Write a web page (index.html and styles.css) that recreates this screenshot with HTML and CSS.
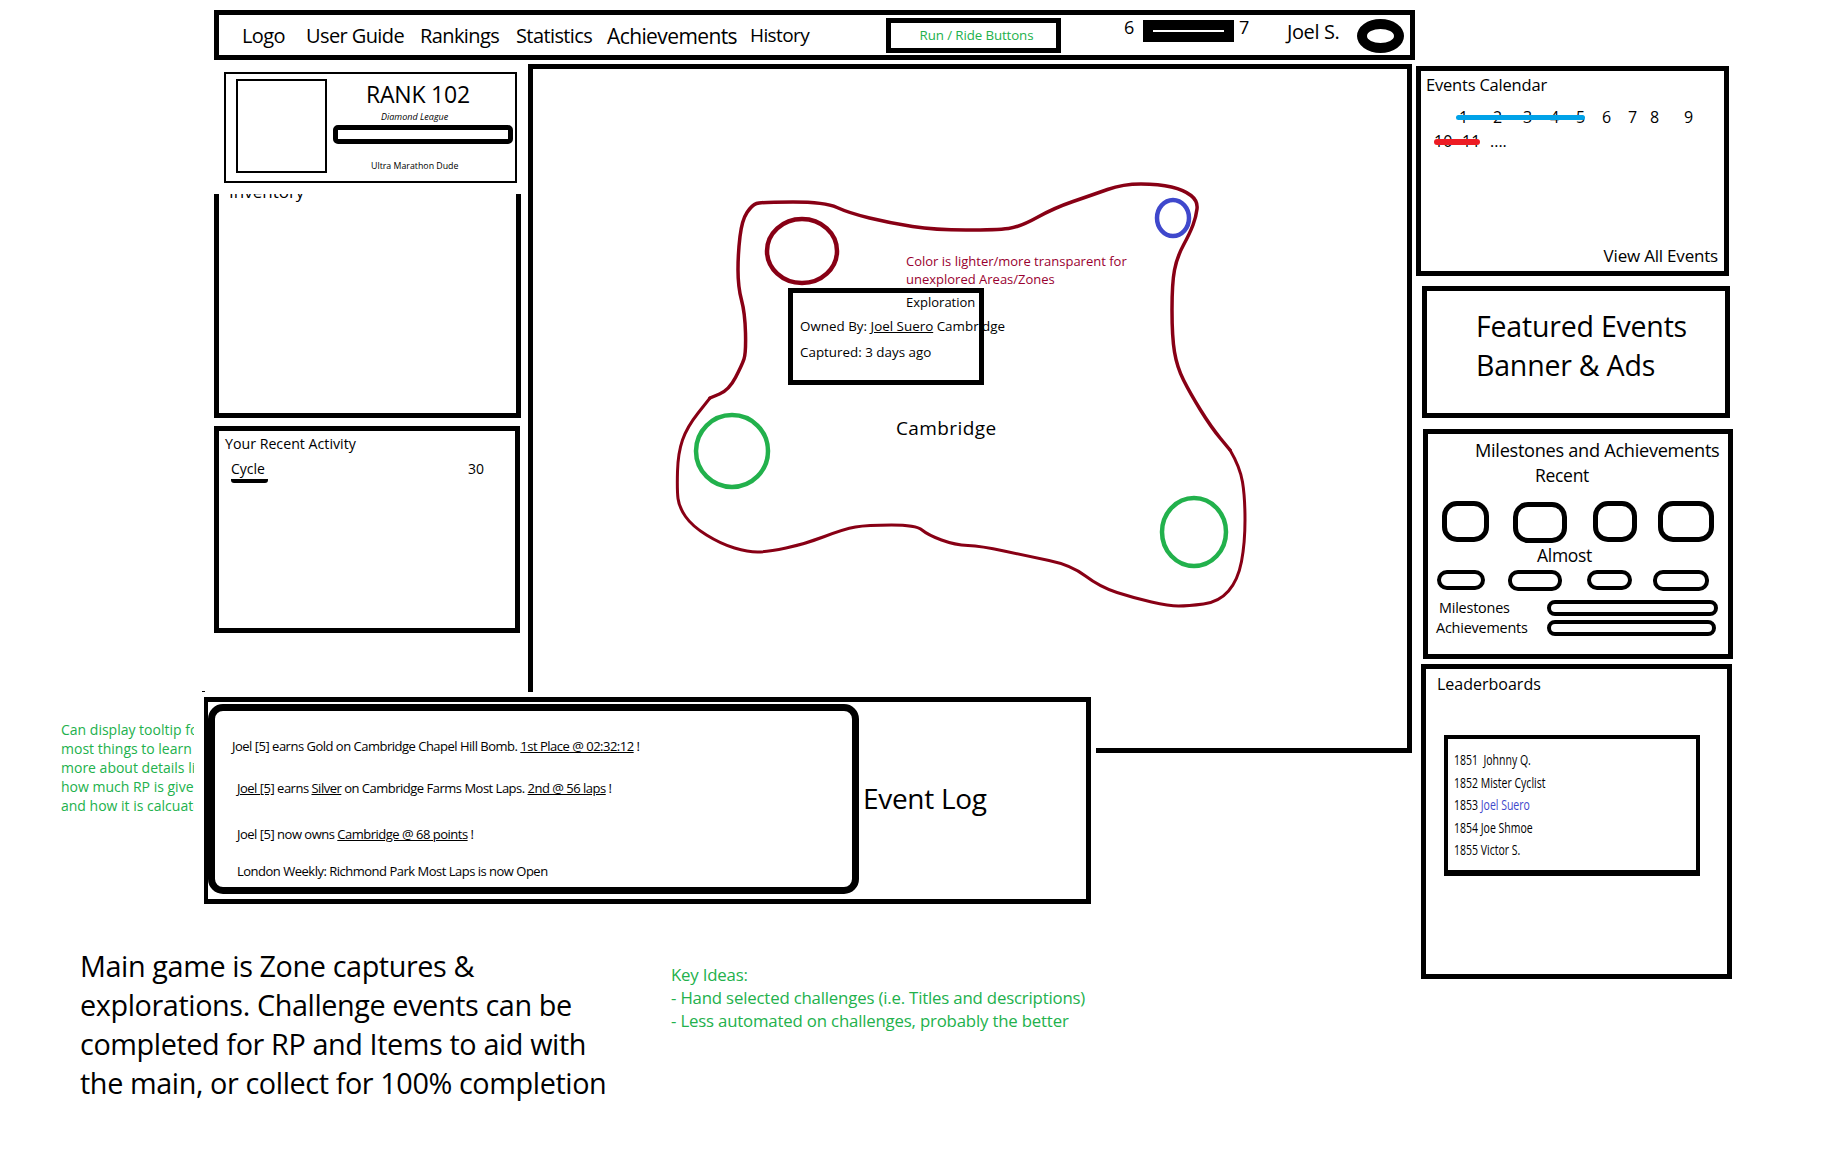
FILE: index.html
```html
<!DOCTYPE html>
<html lang="en">
<head>
    <meta charset="UTF-8">
    <title>Zone Capture Wireframe</title>
    <link rel="stylesheet" href="styles.css">
</head>
<body>

<div class="canvas">

    <!-- Top nav -->
    <div class="panel nav">
        <span class="nav-link">Logo</span>
        <span class="nav-link">User Guide</span>
        <span class="nav-link">Rankings</span>
        <span class="nav-link">Statistics</span>
        <span class="nav-link nav-link-big">Achievements</span>
        <span class="nav-link nav-link-small">History</span>
        <div class="run-box">Run / Ride Buttons</div>
        <span class="level">6</span>
        <div class="level-bar"><div class="level-fill"></div></div>
        <span class="level">7</span>
        <span class="user-name">Joel S.</span>
        <div class="avatar"></div>
    </div>

    <!-- Map -->
    <div class="panel map"></div>
    <svg class="map-art" width="1834" height="1152" viewBox="0 0 1834 1152">
        <path class="zone zone-top" d="M710,398 L719.5,394 Q729,390 735.5,377.5 Q742,365 744,359 Q746,353 745.5,333 Q745,313 741.5,300 Q738,287 738,270 Q738,253 740,236.5 Q742,220 747,212.5 Q752,205 756.5,203.5 Q761,202 793,202 Q825,202 837,207.5 Q849,213 869.5,218 Q890,223 912.5,226.5 Q935,230 966,230 Q997,230 1008.5,228.5 Q1020,227 1037,217.5 Q1054,208 1073,201.5 Q1092,195 1107.5,189.5 Q1123,184 1141,184 Q1159,184 1171.5,187 Q1184,190 1191,195.5 Q1198,201 1197,209 Q1196,217 1193,225 Q1190,233 1183.5,245 Q1177,257 1174.5,270 Q1172,283 1172,310 Q1172,337 1174.5,352 Q1177,367 1183.5,380 Q1190,393 1200.5,410 Q1211,427 1220.5,438.5 L1230,450"/>
        <path class="zone zone-bottom" d="M1230,450 Q1240,467 1242.5,482 Q1245,497 1245,520 Q1245,543 1241.5,561.5 Q1238,580 1228.5,591 Q1219,602 1203.5,604 Q1188,606 1178.5,606 Q1169,606 1151.5,602 Q1134,598 1117,592.5 Q1100,587 1085.5,576 Q1071,565 1049,560.5 Q1027,556 1004,551 Q981,546 968,545.5 Q955,545 941.5,540 Q928,535 922,530 Q916,525 891.5,525 Q867,525 855.5,527 Q844,529 824.5,536.5 Q805,544 786,548 Q767,552 757.5,552 Q748,552 734.5,548 Q721,544 706.5,535 Q692,526 685.5,516.5 Q679,507 678,498.5 Q677,490 677.5,471.5 Q678,453 682.5,440 Q687,427 698.5,412.5 L710,398"/>
        <ellipse class="spot spot-red" cx="802" cy="251" rx="35" ry="32"/>
        <ellipse class="spot spot-blue" cx="1173" cy="218" rx="16" ry="18"/>
        <ellipse class="spot spot-green" cx="732" cy="451" rx="36" ry="36"/>
        <ellipse class="spot spot-green" cx="1194" cy="532" rx="32" ry="34"/>
    </svg>

    <p class="map-note">Color is lighter/more transparent for<br>unexplored Areas/Zones</p>
    <div class="zone-tip">
        <div class="tip-title">Exploration</div>
        <div class="tip-owner">Owned By: <u>Joel Suero</u> Cambridge</div>
        <div class="tip-captured">Captured: 3 days ago</div>
    </div>
    <div class="map-label">Cambridge</div>

    <!-- Left column -->
    <div class="panel inventory"><div class="inventory-title">Inventory</div></div>
    <div class="rank-card">
        <div class="rank-photo"></div>
        <div class="rank-info">
            <div class="rank-title">RANK 102</div>
            <div class="rank-league">Diamond League</div>
            <div class="rank-bar"></div>
            <div class="rank-name">Ultra Marathon Dude</div>
        </div>
    </div>
    <div class="panel activity">
        <div class="activity-title">Your Recent Activity</div>
        <div class="activity-row">
            <span class="activity-type">Cycle</span>
            <span>30</span>
        </div>
    </div>

    <!-- Event log -->
    <div class="panel event-log">
        <div class="event-list">
            <div class="event event-1">Joel [5] earns Gold on Cambridge Chapel Hill Bomb. <u>1st Place @ 02:32:12</u> !</div>
            <div class="event event-2"><u>Joel [5]</u> earns <u>Silver</u> on Cambridge Farms Most Laps. <u>2nd @ 56 laps</u> !</div>
            <div class="event event-3">Joel [5] now owns <u>Cambridge @ 68 points</u> !</div>
            <div class="event event-4">London Weekly: Richmond Park Most Laps is now Open</div>
        </div>
        <div class="event-title">Event Log</div>
    </div>
    <div class="speck"></div>

    <div class="note-tooltip">
        Can display tooltip for<br>most things to learn<br>more about details like<br>how much RP is given<br>and how it is calcuated
    </div>

    <p class="note-main">Main game is Zone captures &amp;<br>explorations. Challenge events can be<br>completed for RP and Items to aid with<br>the main, or collect for 100% completion</p>

    <p class="note-ideas">Key Ideas:<br>- Hand selected challenges (i.e. Titles and descriptions)<br>- Less automated on challenges, probably the better</p>

    <!-- Right column -->
    <div class="panel calendar">
        <div class="calendar-title">Events Calendar</div>
        <div class="days days-1">
            <span>1</span><span>2</span><span>3</span><span>4</span><span>5</span><span>6</span><span>7</span><span>8</span><span>9</span>
            <div class="strike strike-blue"></div>
        </div>
        <div class="days days-2">
            <span>10</span><span>11</span><span>....</span>
            <div class="strike strike-red"></div>
        </div>
        <div class="calendar-link">View All Events</div>
    </div>

    <div class="panel featured">Featured Events<br>Banner &amp; Ads</div>

    <div class="panel milestones">
        <div class="milestones-title">Milestones and Achievements</div>
        <div class="milestones-recent">Recent</div>
        <div class="badges badges-big">
            <div class="badge"></div><div class="badge"></div><div class="badge"></div><div class="badge"></div>
        </div>
        <div class="milestones-almost">Almost</div>
        <div class="badges badges-small">
            <div class="badge"></div><div class="badge"></div><div class="badge"></div><div class="badge"></div>
        </div>
        <div class="progress-row">
            <span class="progress-label progress-label-1">Milestones</span>
            <div class="progress-bar"></div>
        </div>
        <div class="progress-row">
            <span class="progress-label">Achievements</span>
            <div class="progress-bar progress-bar-2"></div>
        </div>
    </div>

    <div class="panel leaderboards">
        <div class="leaderboards-title">Leaderboards</div>
        <div class="board">
            <div class="board-line">1851 &nbsp;Johnny Q.</div>
            <div class="board-line">1852 Mister Cyclist</div>
            <div class="board-line">1853 <span class="board-me">Joel Suero</span></div>
            <div class="board-line">1854 Joe Shmoe</div>
            <div class="board-line">1855 Victor S.</div>
        </div>
    </div>

</div>

</body>
</html>
```

FILE: styles.css
```css
body {
    margin: 0;
    background: #fff;
    color: #000;
    font-family: "Open Sans", "Noto Sans", sans-serif;
}
p {
    margin: 0;
}
.canvas {
    position: relative;
    width: 1834px;
    height: 1152px;
    overflow: hidden;
}

/* every box of the sketch sits at its own spot on the canvas */
.panel {
    position: absolute;
    box-sizing: border-box;
    border: 5px solid #000;
    background: #fff;
}

/* nav */
.nav {
    left: 214px;
    top: 10px;
    width: 1201px;
    height: 50px;
    padding-left: 23px;
    display: grid;
    grid-template-columns: 64px 114px 96px 91px 143px 136px 238px 19px 96px 48px 70px 47px;
    align-items: center;
    font-size: 20px;
    letter-spacing: -0.6px;
    white-space: nowrap;
}
.nav-link {
    margin-top: 1px;
}
.nav-link-big {
    font-size: 21px;
    margin-top: 2px;
}
.nav-link-small {
    font-size: 19px;
    margin-top: -1px;
}
.run-box {
    box-sizing: border-box;
    width: 175px;
    height: 35px;
    padding-left: 6px;
    border: 5px solid #000;
    text-align: center;
    line-height: 25px;
    font-size: 13.3px;
    letter-spacing: -0.1px;
    color: #22b14c;
}
.level {
    align-self: start;
    font-size: 18px;
    line-height: 24px;
    letter-spacing: 0;
}
.level-bar {
    box-sizing: border-box;
    align-self: start;
    margin-top: 5px;
    width: 91px;
    height: 22px;
    padding: 10px 10px 0;
    background: #000;
}
.level-fill {
    height: 2px;
    background: #fff;
}
.user-name {
    align-self: start;
    font-size: 20px;
    line-height: 33px;
    letter-spacing: -0.4px;
}
.avatar {
    box-sizing: border-box;
    width: 47px;
    height: 34px;
    margin-top: 2px;
    border: 10px solid #000;
    border-radius: 50%;
}

/* map */
.map {
    left: 528px;
    top: 64px;
    width: 884px;
    height: 689px;
}
.map-art {
    position: absolute;
    left: 0;
    top: 0;
    pointer-events: none;
}
.zone {
    fill: none;
    stroke: #880015;
    stroke-linejoin: round;
    stroke-linecap: round;
}
.zone-top {
    stroke-width: 3.5;
}
.zone-bottom {
    stroke-width: 3;
}
.spot {
    fill: none;
    stroke-width: 4.5;
}
.spot-red {
    stroke: #880015;
}
.spot-blue {
    stroke: #3f48cc;
}
.spot-green {
    stroke: #22b14c;
}
.map-note {
    position: absolute;
    left: 906px;
    top: 252px;
    font-size: 13px;
    line-height: 18px;
    color: #990030;
    white-space: nowrap;
}
.zone-tip {
    position: absolute;
    box-sizing: border-box;
    left: 788px;
    top: 288px;
    width: 196px;
    height: 97px;
    padding: 4px 0 0 12px;
    background: #fff;
    font-size: 13.4px;
    white-space: nowrap;
}
.zone-tip::after {
    content: "";
    position: absolute;
    inset: 0;
    border: 5px solid #000;
}
.tip-title {
    margin-left: 106px;
    line-height: 20px;
    font-size: 13px;
}
.tip-owner {
    margin-top: 4px;
    line-height: 20px;
}
.tip-captured {
    margin-top: 6px;
    line-height: 20px;
}
.map-label {
    position: absolute;
    left: 896px;
    top: 415px;
    font-size: 19px;
    line-height: 26px;
    letter-spacing: 0.4px;
}

/* left column */
.inventory {
    left: 214px;
    top: 194px;
    width: 307px;
    height: 224px;
    border-top: 0;
    overflow: hidden;
}
.inventory-title {
    margin: -14px 0 0 10px;
    font-size: 17px;
    line-height: 24px;
}
.rank-card {
    position: absolute;
    box-sizing: border-box;
    left: 224px;
    top: 72px;
    width: 293px;
    height: 111px;
    padding: 5px 0 0 10px;
    border: 2px solid #000;
    display: flex;
    gap: 6px;
}
.rank-photo {
    box-sizing: border-box;
    width: 91px;
    height: 94px;
    border: 2px solid #000;
}
.rank-info {
    width: 180px;
}
.rank-title {
    margin-left: 33px;
    font-size: 23px;
    line-height: 30px;
    letter-spacing: -0.2px;
}
.rank-league {
    margin: 1px 0 0 48px;
    height: 13px;
    font-size: 9px;
    line-height: 13px;
    font-style: italic;
}
.rank-bar {
    box-sizing: border-box;
    margin-top: 2px;
    height: 19px;
    border: 5px solid #000;
    border-radius: 5px;
}
.rank-name {
    margin: 15px 0 0 38px;
    font-size: 8.8px;
    line-height: 14px;
    white-space: nowrap;
}
.activity {
    left: 214px;
    top: 426px;
    width: 306px;
    height: 207px;
    padding: 2px 6px;
    font-size: 14.2px;
}
.activity-title {
    line-height: 21px;
}
.activity-row {
    display: flex;
    margin: 4px 0 0 6px;
    line-height: 21px;
    font-size: 14px;
    width: 253px;
    justify-content: space-between;
}
.activity-type {
    box-sizing: border-box;
    height: 25px;
    min-width: 37px;
    border-bottom: 4px solid #000;
    border-radius: 3px;
}

/* event log */
.event-log {
    left: 204px;
    top: 697px;
    width: 887px;
    height: 207px;
    border-left-width: 4px;
    outline: 5px solid #fff;
    display: flex;
    align-items: center;
}
.event-list {
    box-sizing: border-box;
    flex: none;
    align-self: flex-start;
    width: 651px;
    height: 190px;
    margin: 2px 0 0 0;
    padding-left: 17px;
    border: 7px solid #000;
    border-radius: 15px;
    font-size: 13px;
    line-height: 20px;
    letter-spacing: -0.5px;
    white-space: nowrap;
}
.event-1 {
    margin-top: 25px;
}
.event-2 {
    margin: 22px 0 0 5px;
}
.event-3 {
    margin: 26px 0 0 5px;
}
.event-4 {
    margin: 17px 0 0 5px;
}
.event-title {
    margin: -6px 0 0 4px;
    font-size: 28px;
    letter-spacing: -0.3px;
}
.speck {
    position: absolute;
    left: 202px;
    top: 691px;
    width: 3px;
    height: 1px;
    background: #000;
}

/* notes round the sketch */
.note-tooltip {
    position: absolute;
    left: 61px;
    top: 720px;
    width: 133px;
    overflow: hidden;
    font-size: 14px;
    line-height: 19px;
    color: #22b14c;
    white-space: nowrap;
}
.note-main {
    position: absolute;
    left: 80px;
    top: 946px;
    font-size: 28.8px;
    line-height: 39px;
    letter-spacing: -0.4px;
    white-space: nowrap;
}
.note-ideas {
    position: absolute;
    left: 671px;
    top: 963px;
    font-size: 16.8px;
    line-height: 23px;
    letter-spacing: -0.18px;
    color: #22b14c;
    white-space: nowrap;
}

/* right column */
.calendar {
    left: 1416px;
    top: 66px;
    width: 313px;
    height: 210px;
    padding: 2px 5px;
}
.calendar-title {
    font-size: 16.5px;
    line-height: 23px;
    letter-spacing: -0.2px;
}
.days {
    position: relative;
    display: grid;
    font-size: 16px;
    line-height: 24px;
}
.days-1 {
    margin: 9px 0 0 33px;
    grid-template-columns: 34px 30px 27px 26px 26px 26px 22px 34px auto;
}
.days-2 {
    margin: 0 0 0 8px;
    grid-template-columns: 28px 28px auto;
}
.strike {
    position: absolute;
    height: 5px;
    border-radius: 3px;
}
.strike-blue {
    left: -3px;
    top: 10px;
    width: 129px;
    background: #00a2e8;
}
.strike-red {
    left: 0;
    top: 10px;
    width: 46px;
    height: 6px;
    background: #ed1c24;
}
.calendar-link {
    position: absolute;
    right: 6px;
    bottom: 4px;
    font-size: 17px;
    line-height: 22px;
    letter-spacing: -0.2px;
}
.featured {
    left: 1422px;
    top: 286px;
    width: 308px;
    height: 132px;
    padding: 16px 0 0 49px;
    font-size: 28.5px;
    line-height: 39px;
    letter-spacing: -0.2px;
}
.milestones {
    left: 1423px;
    top: 429px;
    width: 310px;
    height: 230px;
    font-size: 17.5px;
}
.milestones-title {
    margin: 4px 0 0 47px;
    font-size: 18.2px;
    line-height: 24px;
    letter-spacing: -0.3px;
    white-space: nowrap;
}
.milestones-recent {
    margin: 1px 0 0 107px;
    line-height: 24px;
    letter-spacing: -0.3px;
}
.badges {
    display: flex;
}
.badge {
    box-sizing: border-box;
    border: 5px solid #000;
}
.badges-big {
    margin: 14px 0 0 14px;
    gap: 24px;
}
.badges-big .badge {
    height: 41px;
    width: 47px;
    border-radius: 15px;
}
.badges-big .badge:nth-child(2) {
    width: 54px;
    margin-top: 1px;
}
.badges-big .badge:nth-child(3) {
    width: 44px;
    margin-left: 2px;
}
.badges-big .badge:nth-child(4) {
    width: 56px;
    margin-left: -3px;
}
.milestones-almost {
    margin: 0 0 0 109px;
    line-height: 24px;
    letter-spacing: -0.3px;
}
.badges-small {
    margin: 3px 0 0 9px;
    gap: 23px;
}
.badges-small .badge {
    height: 20px;
    width: 48px;
    border-width: 4px;
    border-radius: 10px;
}
.badges-small .badge:nth-child(2) {
    width: 54px;
    height: 21px;
}
.badges-small .badge:nth-child(3) {
    width: 45px;
    margin-left: 2px;
}
.badges-small .badge:nth-child(4) {
    width: 56px;
    height: 21px;
    margin-left: -2px;
}
.progress-row {
    display: flex;
    align-items: center;
    height: 20px;
    font-size: 14.4px;
    letter-spacing: -0.2px;
}
.badges-small + .progress-row {
    margin-top: 7px;
}
.progress-label {
    flex: none;
    width: 111px;
    margin-left: 8px;
    margin-top: -1px;
}
.progress-label-1 {
    width: 108px;
    margin-left: 11px;
}
.progress-bar {
    box-sizing: border-box;
    width: 171px;
    height: 16px;
    border: 4px solid #000;
    border-radius: 8px;
}
.progress-bar-2 {
    width: 169px;
}
.leaderboards {
    left: 1421px;
    top: 664px;
    width: 311px;
    height: 315px;
    padding: 4px 11px;
}
.leaderboards-title {
    font-size: 16px;
    line-height: 23px;
}
.board {
    box-sizing: border-box;
    width: 256px;
    height: 141px;
    margin: 39px 0 0 7px;
    padding: 9px 6px;
    border: 4px solid #000;
    border-bottom-width: 6px;
    font-size: 15px;
    line-height: 22.5px;
}
/* names are squeezed sideways in the original sketch */
.board-line {
    white-space: nowrap;
    transform: scaleX(0.7);
    transform-origin: left center;
}
.board-me {
    color: #3f48cc;
}
```
